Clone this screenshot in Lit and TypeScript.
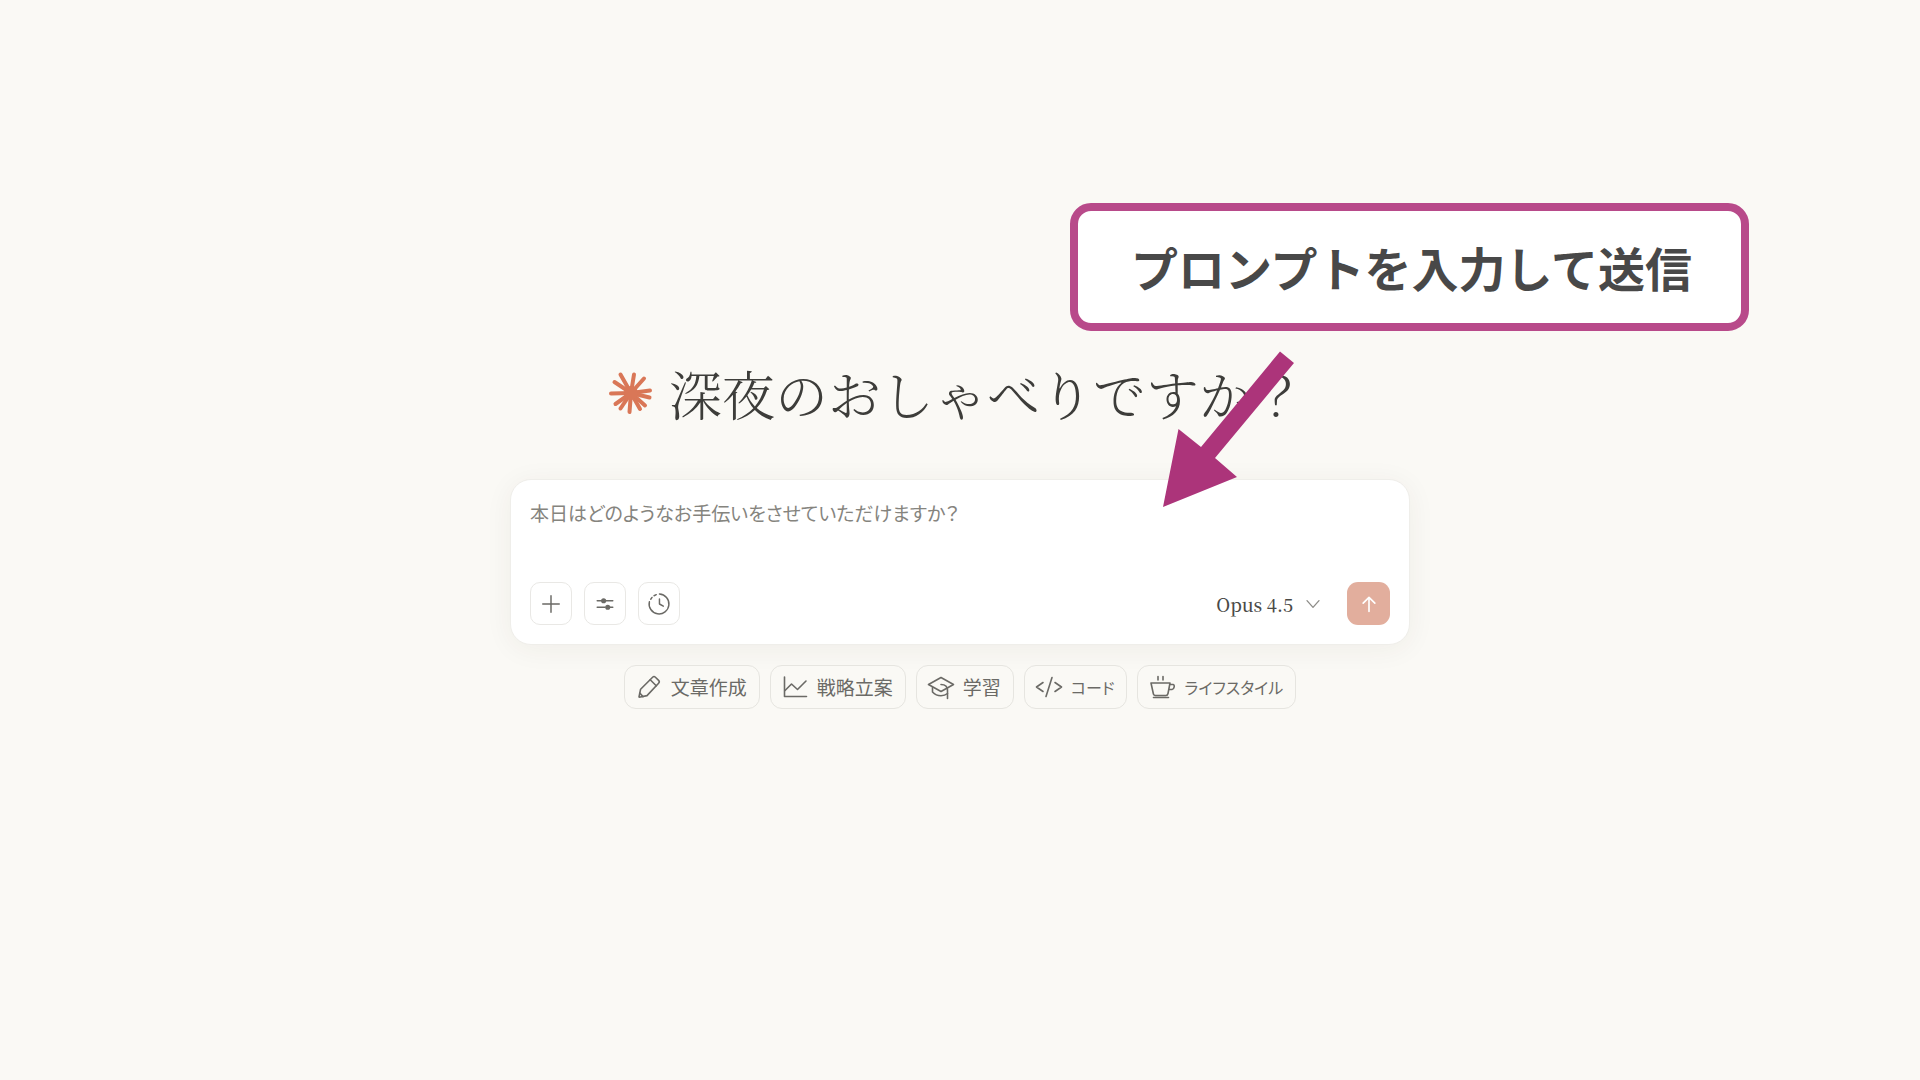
import { LitElement, html, svg, css } from "lit";
import { customElement, property, state } from "lit/decorators.js";
import { classMap } from "lit/directives/class-map.js";

const icons: Record<string, unknown> = {
  plus: svg`<path d="M12 3v18M3 12h18"/>`,
  sliders: svg`<path d="M3.5 8.5h5M12 8.5h8.5M3.5 15.5H12M16 15.5h4.5"/><circle cx="10.5" cy="8.5" r="2" fill="currentColor"/><circle cx="15" cy="15.5" r="2" fill="currentColor"/>`,
  clock: svg`<path d="M12.5 1.2a10.800 10.800 0 1 1-11 8.400"/><path d="M3 6.800l1.400-2M6.600 3L9 1.800"/><path d="M12.500 6.500V12l4.200 2.400"/>`,
  pencil: svg`<path d="M15.600 2.200a2 2 0 0 1 2.800 0l3.200 3.200a2 2 0 0 1 0 2.800L10 20.600 2.200 22.200 2 21.800 3.600 14.200z"/><path d="M13.200 4.800l6 6M2.800 18l3.200 3.600"/>`,
  chart: svg`<path d="M1.500 2v19.500h22"/><path d="M2 15.500L8.500 9l6 5.500L23 6"/>`,
  cap: svg`<path d="M12 2.500L-.5 9.500 12 16.500 24.500 9.500z"/><path d="M3.500 12.500V17c2.500 2.800 5.500 3.800 8.500 3.800s5-1 6.500-2.300"/><path d="M12 9.500c4 0 6.500 2 6.500 6v8"/>`,
  code: svg`<path d="M6 7.500L-.5 12 6 16.500M18 7.500l6.500 4.500-6.500 4.500M15 2.500l-6 19"/>`,
  cup: svg`<path d="M1 8h19l-2 10.500c-.3 1.500-1 2-2 2H5.500c-1.200 0-2-.6-2.200-2zM20 9.500h3c2 0 1.500 4.500-1 5h-3M3.500 22.500h15"/><path d="M8 1.500V5M13 1.500V5"/>`,
  arrow: svg`<path d="M12 21V4M5 11l7-7 7 7"/>`,
  chevron: svg`<path d="M3 7l9 10 9-10"/>`,
};

@customElement("line-icon")
class LineIcon extends LitElement {
  @property() name = "plus";
  static styles = css`
    :host { display: block; }
    .icon {
      display: block;
      width: 100%;
      height: 100%;
      fill: none;
      stroke: currentColor;
      stroke-width: var(--stroke, 1.6);
      stroke-linecap: round;
      stroke-linejoin: round;
      overflow: visible;
    }
  `;
  render() {
    return html`<svg class="icon" viewBox="0 0 24 24" aria-hidden="true">${icons[this.name]}</svg>`;
  }
}

@customElement("prompt-card")
class PromptCard extends LitElement {
  @state() private text = "";
  static styles = css`
    :host { display: block; }
    .card {
      display: flex;
      flex-direction: column;
      gap: 17px;
      padding: 19px;
      border: 1px solid #efeeea;
      border-radius: 21px;
      background: #fff;
      box-shadow: 0 4px 28px rgba(60, 55, 30, 0.06);
    }
    .input {
      display: block;
      box-sizing: border-box;
      width: 100%;
      height: 66px;
      padding: 0;
      border: 0;
      outline: 0;
      resize: none;
      background: transparent;
      color: #3d3d3a;
      font: 19px/28px "Noto Sans CJK JP", sans-serif;
      font-feature-settings: "palt";
    }
    .input::placeholder { color: #85847e; opacity: 1; }
    .bar { display: flex; align-items: center; justify-content: space-between; }
    .group { display: flex; align-items: center; gap: 12px; }
    .tool {
      display: grid;
      place-items: center;
      box-sizing: border-box;
      width: 42px;
      height: 43px;
      padding: 0;
      border: 1px solid #e9e8e5;
      border-radius: 10px;
      background: #fff;
      color: #6b6a66;
    }
    .glyph { width: 22px; height: 22px; }
    .model { display: grid; align-items: center; }
    .select {
      grid-area: 1 / 1;
      appearance: none;
      field-sizing: content;
      border: 0;
      padding: 0 28px 0 0;
      background: transparent;
      color: #4a4a47;
      font: 500 18px/28px "Noto Serif CJK JP", "Liberation Serif", serif;
    }
    .chev {
      grid-area: 1 / 1;
      justify-self: end;
      width: 16px;
      height: 16px;
      color: #8d8c88;
      pointer-events: none;
      --stroke: 2;
    }
    .right { display: flex; align-items: center; gap: 26px; }
    .send {
      display: grid;
      place-items: center;
      width: 43px;
      height: 43px;
      padding: 0;
      border: 0;
      border-radius: 11px;
      background: #e2ae9d;
      color: #fff;
      --stroke: 2;
    }
    .up { width: 20px; height: 20px; }
  `;
  private onInput(e: Event) {
    this.text = (e.target as HTMLTextAreaElement).value;
  }
  render() {
    return html`
      <form class="card" @submit=${(e: Event) => e.preventDefault()}>
        <textarea
          class="input"
          aria-label="プロンプト"
          placeholder="本日はどのようなお手伝いをさせていただけますか？"
          .value=${this.text}
          @input=${this.onInput}
        ></textarea>
        <div class="bar">
          <div class="group">
            ${[["plus", "追加"], ["sliders", "設定"], ["clock", "履歴"]].map(
              ([name, label]) => html`
                <button class="tool" type="button" aria-label=${label}>
                  <line-icon class="glyph" name=${name}></line-icon>
                </button>`
            )}
          </div>
          <div class="right">
            <div class="model">
              <select class="select" aria-label="モデル"><option>Opus 4.5</option></select>
              <line-icon class="chev" name="chevron"></line-icon>
            </div>
            <button class="send" type="submit" aria-label="送信">
              <line-icon class="up" name="arrow"></line-icon>
            </button>
          </div>
        </div>
      </form>`;
  }
}

interface Topic {
  icon: string;
  label: string;
  compact?: boolean;
}

@customElement("app-root")
class AppRoot extends LitElement {
  static styles = css`
    :host {
      display: block;
      min-height: 100vh;
      background: #faf9f5;
      font-family: "Noto Sans CJK JP", sans-serif;
    }
    .page {
      display: flex;
      justify-content: center;
      padding: 353px 24px 48px;
    }
    .column {
      position: relative;
      display: flex;
      flex-direction: column;
      width: 100%;
      max-width: 900px;
    }
    .greeting {
      display: flex;
      align-items: center;
      justify-content: center;
      gap: 16px;
      margin: 0 0 46px;
      padding-right: 6px;
      color: #3d3d3a;
      font: 300 53px/80px "Noto Serif CJK JP", "Noto Serif JP", "Noto Sans CJK JP", serif;
      white-space: nowrap;
    }
    .burst { width: 44px; height: 44px; stroke: #d97757; stroke-width: 4; stroke-linecap: round; }
    .chips {
      display: flex;
      flex-wrap: wrap;
      justify-content: center;
      gap: 10px;
      margin-top: 20px;
    }
    .chip {
      display: flex;
      align-items: center;
      gap: 10px;
      box-sizing: border-box;
      height: 44px;
      padding: 0 12px;
      border: 1px solid #e6e5e0;
      border-radius: 12px;
      background: #faf9f5;
      color: #6b6a66;
      font: 19px/28px "Noto Sans CJK JP", sans-serif;
      font-feature-settings: "palt";
    }
    .compact { font-size: 16px; }
    .glyph { width: 24px; height: 24px; }
    .callout {
      position: absolute;
      left: 560px;
      top: -150px;
      box-sizing: border-box;
      width: 679px;
      margin: 0;
      padding: 22px 0 22px 4px;
      border: 8px solid #b84a8a;
      border-radius: 21px;
      background: #fff;
      color: #484848;
      font-weight: 700;
      font-size: 47px;
      line-height: 68px;
      text-align: center;
      white-space: nowrap;
    }
    .pointer {
      position: absolute;
      left: 651px;
      top: -3px;
      width: 134px;
      height: 160px;
      fill: #ac347a;
      pointer-events: none;
    }
  `;
  private rays = [
    [19.5, 11.5], [33, 11.5], [43, 15.5], [49, 27.5], [48.5, 34.5], [44, 42.5],
    [39, 46], [28.5, 49], [19.5, 45.5], [14.5, 41], [10, 30.5], [13.5, 19],
  ];
  private topics: Topic[] = [
    { icon: "pencil", label: "文章作成" },
    { icon: "chart", label: "戦略立案" },
    { icon: "cap", label: "学習" },
    { icon: "code", label: "コード", compact: true },
    { icon: "cup", label: "ライフスタイル", compact: true },
  ];
  render() {
    return html`
      <main class="page">
        <div class="column">
          <h1 class="greeting">
            <svg class="burst" viewBox="8 8 44 44" aria-hidden="true">
              ${this.rays.map(([x, y]) => svg`<line x1="30" y1="30" x2=${x} y2=${y}/>`)}
              <circle cx="30" cy="30" r="7" fill="#d97757" stroke="none"/>
            </svg>
            <span>深夜のおしゃべりですか？</span>
          </h1>
          <prompt-card></prompt-card>
          <nav class="chips">
            ${this.topics.map(
              ({ icon, label, compact }) => html`
                <button class=${classMap({ chip: true, compact: !!compact })} type="button">
                  <line-icon class="glyph" name=${icon}></line-icon>${label}
                </button>`
            )}
          </nav>
          <p class="callout">プロンプトを入力して送信</p>
          <svg class="pointer" viewBox="0 0 134 160" aria-hidden="true">
            <path d="M119 1.500L133 13 54 108 76 127 2 157 17.500 79 40 97z"/>
          </svg>
        </div>
      </main>`;
  }
}
